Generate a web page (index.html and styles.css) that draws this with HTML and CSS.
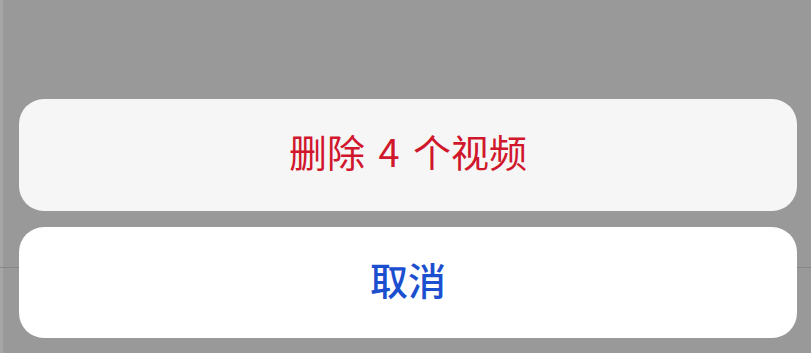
FILE: index.html
```html
<!DOCTYPE html>
<html lang="zh-CN">
<head>
<meta charset="utf-8">
<title>删除视频</title>
<link rel="stylesheet" href="styles.css">
</head>
<body>
<div class="sheet">
  <div class="action-group">
    <button class="action destructive">删除 4 个视频</button>
  </div>
  <div class="action-group cancel-group">
    <button class="action cancel">取消</button>
  </div>
</div>
</body>
</html>
```
FILE: styles.css
```css
html, body {
  margin: 0;
  padding: 0;
  height: 100%;
}
body {
  background:
    linear-gradient(to bottom, transparent 267px, #878787 267px, #878787 268px, transparent 268px),
    linear-gradient(to right, #a6a6a6 0, #a6a6a6 3px, #999999 3px);
  font-family: "Noto Sans CJK SC", "Noto Sans", sans-serif;
  overflow: hidden;
}
.sheet {
  display: flex;
  flex-direction: column;
  gap: 16px;
  padding: 99px 14px 0 19px;
}
.action-group {
  width: 778px;
  height: 112px;
  border-radius: 25px;
  background: #f6f6f6;
  display: flex;
  overflow: hidden;
}
.cancel-group {
  height: 111px;
  background: #ffffff;
}
.action {
  flex: 1;
  border: 0;
  background: transparent;
  font-family: inherit;
  font-size: 38px;
  line-height: 1;
  padding: 0 0 8px;
  margin: 0;
  cursor: pointer;
}
.destructive {
  color: #d0172c;
  font-weight: 400;
  word-spacing: 5px;
}
.cancel {
  color: #1b4fcf;
  font-weight: 500;
}
```
